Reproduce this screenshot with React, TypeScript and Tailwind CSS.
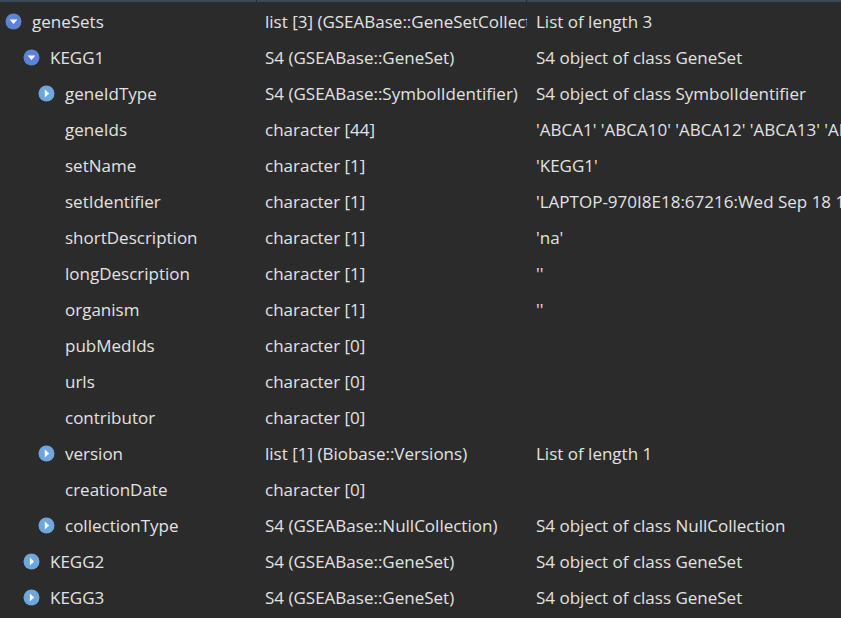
import React from "react";

type Row = {
  name: string;
  level: number;
  icon?: "open" | "closed";
  type: string;
  value: string;
};

const rows: Row[] = [
  { name: "geneSets", level: 0, icon: "open", type: "list [3] (GSEABase::GeneSetCollection)", value: "List of length 3" },
  { name: "KEGG1", level: 1, icon: "open", type: "S4 (GSEABase::GeneSet)", value: "S4 object of class GeneSet" },
  { name: "geneIdType", level: 2, icon: "closed", type: "S4 (GSEABase::SymbolIdentifier)", value: "S4 object of class SymbolIdentifier" },
  { name: "geneIds", level: 2, type: "character [44]", value: "'ABCA1' 'ABCA10' 'ABCA12' 'ABCA13' 'ABCA2' 'ABCA3'" },
  { name: "setName", level: 2, type: "character [1]", value: "'KEGG1'" },
  { name: "setIdentifier", level: 2, type: "character [1]", value: "'LAPTOP-970I8E18:67216:Wed Sep 18 10:21:33 2019:1'" },
  { name: "shortDescription", level: 2, type: "character [1]", value: "'na'" },
  { name: "longDescription", level: 2, type: "character [1]", value: "''" },
  { name: "organism", level: 2, type: "character [1]", value: "''" },
  { name: "pubMedIds", level: 2, type: "character [0]", value: "" },
  { name: "urls", level: 2, type: "character [0]", value: "" },
  { name: "contributor", level: 2, type: "character [0]", value: "" },
  { name: "version", level: 2, icon: "closed", type: "list [1] (Biobase::Versions)", value: "List of length 1" },
  { name: "creationDate", level: 2, type: "character [0]", value: "" },
  { name: "collectionType", level: 2, icon: "closed", type: "S4 (GSEABase::NullCollection)", value: "S4 object of class NullCollection" },
  { name: "KEGG2", level: 1, icon: "closed", type: "S4 (GSEABase::GeneSet)", value: "S4 object of class GeneSet" },
  { name: "KEGG3", level: 1, icon: "closed", type: "S4 (GSEABase::GeneSet)", value: "S4 object of class GeneSet" },
];

const indent = ["pl-[5px]", "pl-[23px]", "pl-[38px]"];

function ToggleIcon({ kind }: { kind: "open" | "closed" }) {
  if (kind === "open") {
    return (
      <svg width="17" height="17" viewBox="0 0 17 17">
        <circle cx="8.5" cy="8.5" r="8" fill="#5d83d9" />
        <path d="M4.6 6.6 L12.4 6.6 L8.5 11 Z" fill="#ffffff" />
      </svg>
    );
  }
  return (
    <svg width="17" height="17" viewBox="0 0 17 17">
      <circle cx="8.5" cy="8.5" r="8" fill="#6fa6dc" />
      <path d="M6.8 4.6 L11.2 8.5 L6.8 12.4 Z" fill="#ffffff" />
    </svg>
  );
}

export default function App() {
  return (
    <div className="w-[841px] h-[618px] overflow-hidden bg-[#2b2b2b] text-[#e2e2e2] font-['Open_Sans','Noto_Sans',sans-serif] text-[17px]">
      <div className="h-[3px] grid grid-cols-[257px_270px_1fr] bg-[#3b4856] border-b border-[#26303a]">
        <div className="border-r border-[#1f2a35]" />
        <div className="border-r border-[#1f2a35]" />
        <div />
      </div>
      {rows.map((r) => (
        <div key={r.name} className="h-[36px] grid grid-cols-[257px_270px_1fr] items-center whitespace-nowrap pt-[1px]">
          <div className={`flex items-center gap-[10px] overflow-hidden ${indent[r.level]}`}>
            <span className="w-[17px] h-[17px] flex shrink-0">
              {r.icon && <ToggleIcon kind={r.icon} />}
            </span>
            <span>{r.name}</span>
          </div>
          <div className="pl-[8px] pr-[4px] overflow-hidden">{r.type}</div>
          <div className="pl-[9px] overflow-hidden">{r.value}</div>
        </div>
      ))}
    </div>
  );
}
